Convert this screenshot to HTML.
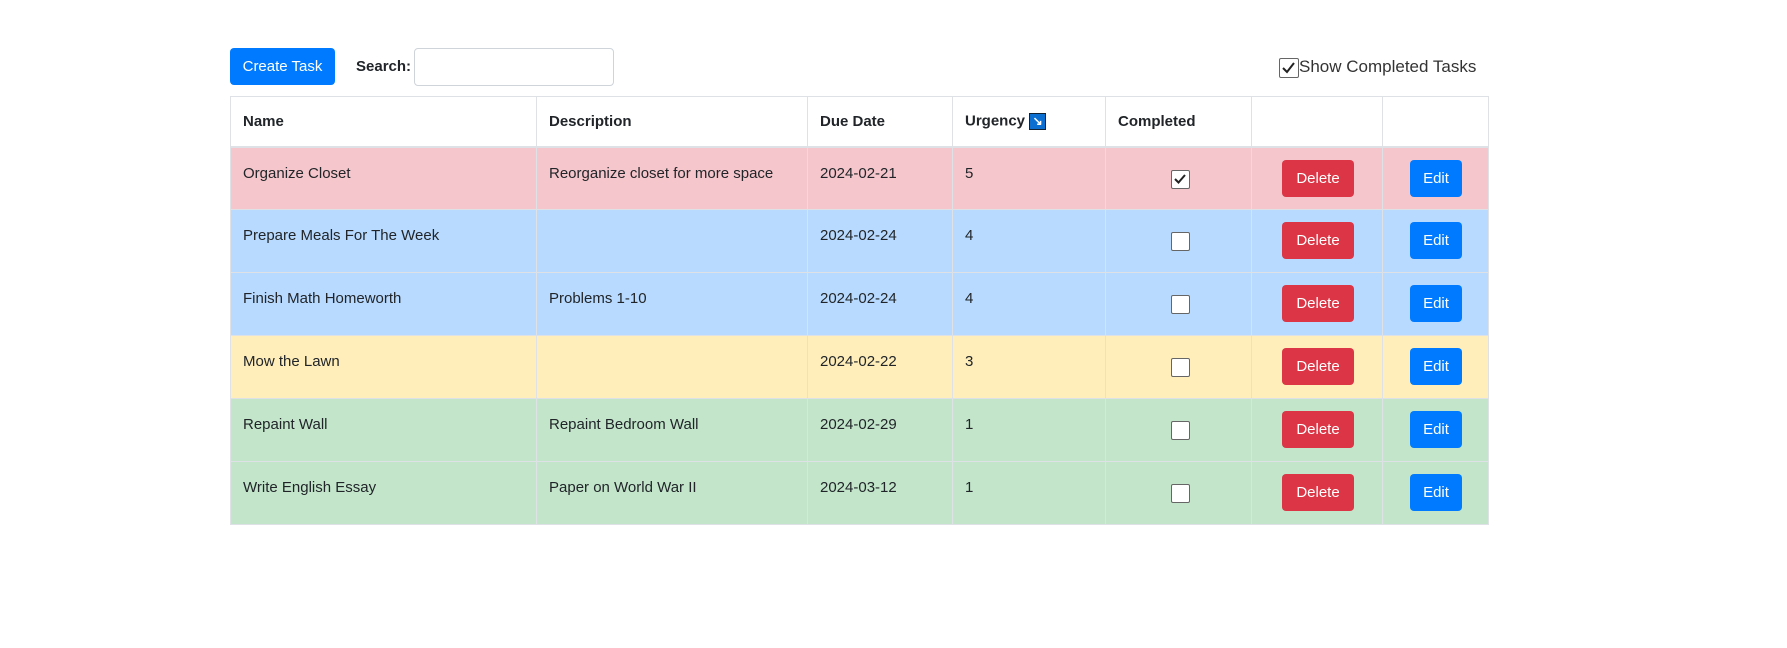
<!DOCTYPE html>
<html><head><style>
*{box-sizing:border-box}
body{margin:0;width:1787px;height:648px;background:#fff;font-family:"Liberation Sans",sans-serif;color:#212529;font-size:16px;position:relative;overflow:hidden}
.btn{position:absolute;color:#fff;border-radius:4px;font-size:15px;display:flex;align-items:center;justify-content:center}
.blue{background:#007bff}.red{background:#dc3545}
table{position:absolute;left:230px;top:96px;border-collapse:collapse;table-layout:fixed;width:1258px}
td,th{border:1px solid #dee2e6;padding:0 12px;text-align:left;vertical-align:top}
th{height:50px;font-weight:bold;font-size:15px;vertical-align:middle;border-bottom:2px solid #dee2e6}
td{height:63px;padding-top:17px;font-size:15px;position:relative}
.cb{position:absolute;left:65px;top:22px;width:19px;height:19px;border:1.5px solid #666;background:#fff;border-radius:2px}
.p td{background:#f5c6cb}.b td{background:#b8daff}.y td{background:#ffeeba}.g td{background:#c3e6cb}
td .btn{top:12px;height:37px}
.del{left:30px;width:72px}.ed{left:27px;width:52px}
</style></head><body>
<div class="btn blue" style="left:230px;top:48px;width:105px;height:37px">Create Task</div>
<div style="position:absolute;left:356px;top:58px;font-weight:bold;font-size:15px">Search:</div>
<div style="position:absolute;left:414px;top:48px;width:200px;height:38px;border:1px solid #ced4da;border-radius:4px"></div>
<div style="position:absolute;left:1279px;top:58px;width:20px;height:20px;border:1.5px solid #666;border-radius:2px"><svg width="17" height="17" viewBox="0 0 17 17"><path d="M3 9l4 4 7-9" stroke="#222" stroke-width="2" fill="none"/></svg></div>
<div style="position:absolute;left:1299px;top:57px;font-size:17px;color:#333">Show Completed Tasks</div>
<table>
<colgroup><col style="width:306px"><col style="width:271px"><col style="width:145px"><col style="width:153px"><col style="width:146px"><col style="width:131px"><col style="width:106px"></colgroup>
<tr><th>Name</th><th>Description</th><th>Due Date</th><th><span style="vertical-align:middle">Urgency</span> <span style="display:inline-block;width:17px;height:17px;background:#0a6fd0;border:1px solid #123;vertical-align:middle;color:#fff;font-size:12px;line-height:15px;text-align:center">↘</span></th><th>Completed</th><th></th><th></th></tr>
<tr class="p"><td>Organize Closet</td><td>Reorganize closet for more space</td><td>2024-02-21</td><td>5</td><td><div class="cb"><svg width="16" height="16" viewBox="0 0 16 16"><path d="M3 8l3.5 3.5L13 4" stroke="#222" stroke-width="2" fill="none"/></svg></div></td><td><div class="btn red del">Delete</div></td><td><div class="btn blue ed">Edit</div></td></tr>
<tr class="b"><td>Prepare Meals For The Week</td><td></td><td>2024-02-24</td><td>4</td><td><div class="cb"></div></td><td><div class="btn red del">Delete</div></td><td><div class="btn blue ed">Edit</div></td></tr>
<tr class="b"><td>Finish Math Homeworth</td><td>Problems 1-10</td><td>2024-02-24</td><td>4</td><td><div class="cb"></div></td><td><div class="btn red del">Delete</div></td><td><div class="btn blue ed">Edit</div></td></tr>
<tr class="y"><td>Mow the Lawn</td><td></td><td>2024-02-22</td><td>3</td><td><div class="cb"></div></td><td><div class="btn red del">Delete</div></td><td><div class="btn blue ed">Edit</div></td></tr>
<tr class="g"><td>Repaint Wall</td><td>Repaint Bedroom Wall</td><td>2024-02-29</td><td>1</td><td><div class="cb"></div></td><td><div class="btn red del">Delete</div></td><td><div class="btn blue ed">Edit</div></td></tr>
<tr class="g"><td>Write English Essay</td><td>Paper on World War II</td><td>2024-03-12</td><td>1</td><td><div class="cb"></div></td><td><div class="btn red del">Delete</div></td><td><div class="btn blue ed">Edit</div></td></tr>
</table>
</body></html>
